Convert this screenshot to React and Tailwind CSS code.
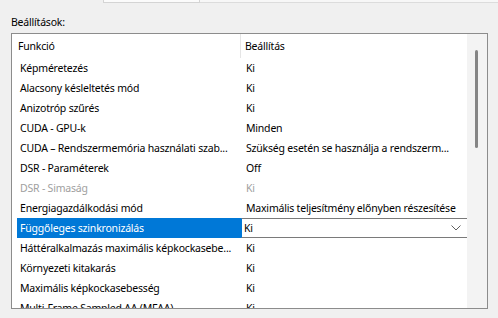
import React from 'react';

const rows = [
  { name: 'Képméretezés', value: 'Ki' },
  { name: 'Alacsony késleltetés mód', value: 'Ki' },
  { name: 'Anizotróp szűrés', value: 'Ki' },
  { name: 'CUDA - GPU-k', value: 'Minden' },
  { name: 'CUDA – Rendszermemória használati szab...', value: 'Szükség esetén se használja a rendszerm...' },
  { name: 'DSR - Paraméterek', value: 'Off' },
  { name: 'DSR - Simaság', value: 'Ki', disabled: true },
  { name: 'Energiagazdálkodási mód', value: 'Maximális teljesítmény előnyben részesítése' },
  { name: 'Függőleges szinkronizálás', value: 'Ki', selected: true },
  { name: 'Háttéralkalmazás maximális képkockasebe...', value: 'Ki' },
  { name: 'Környezeti kitakarás', value: 'Ki' },
  { name: 'Maximális képkockasebesség', value: 'Ki' },
  { name: 'Multi-Frame Sampled AA (MFAA)', value: 'Ki' },
];

function Row({ row }) {
  if (row.selected) {
    return (
      <div className="flex h-[20px] shrink-0">
        <div className="w-[229px] pl-[5px] flex">
          <div className="flex-1 bg-[#0078d7] text-white pl-[3px] leading-[20px] whitespace-nowrap overflow-hidden">
            {row.name}
          </div>
        </div>
        <div className="w-[227px] -mr-[1px] border border-[#7a7a7a] border-l-[#0078d7] bg-white flex items-center justify-between pl-[2px] pr-[6px]">
          <span className="leading-[18px]">{row.value}</span>
          <svg width="10" height="6" viewBox="0 0 10 6" fill="none">
            <path d="M0.5 0.5 L5 5 L9.5 0.5" stroke="#606060" strokeWidth="1" />
          </svg>
        </div>
      </div>
    );
  }
  const color = row.disabled ? 'text-[#a0a0a0]' : 'text-black';
  return (
    <div className={`flex h-[20px] shrink-0 leading-[20px] ${color}`}>
      <div className="w-[229px] pl-[8px] whitespace-nowrap overflow-hidden">{row.name}</div>
      <div className="w-[226px] pl-[5px] whitespace-nowrap overflow-hidden">{row.value}</div>
    </div>
  );
}

export default function App() {
  return (
    <div className="w-[498px] h-[318px] bg-[#f0f0f0] overflow-hidden font-['Noto_Sans',sans-serif] text-[10.5px] tracking-[-0.2px] text-black">
      {/* remnant of the tab strip above */}
      <div className="flex h-[3px]">
        <div className="w-[103px]" />
        <div className="w-[97px] bg-[#fbfbfb] border-b border-l border-r border-[#d4d4d4]" />
        <div className="flex-1 bg-[#f7f7f7] border-b border-[#dcdcdc]" />
      </div>

      <div className="pl-[11px] pt-[11px] h-[30px] leading-[16px]">Beállítások:</div>

      <div className="ml-[11px] w-[477px] h-[276px] border border-[#8c8c8c] bg-white flex">
        <div className="flex-1 flex flex-col overflow-hidden">
          <div className="flex h-[24px] shrink-0 leading-[24px]">
            <div className="w-[229px] pl-[6px] border-r border-[#e5e5e5]">Funkció</div>
            <div className="pl-[4px]">Beállítás</div>
          </div>
          {rows.map((row) => (
            <Row key={row.name} row={row} />
          ))}
        </div>
        <div className="w-[20px] bg-[#f3f3f3] flex flex-col items-center">
          <div className="h-[16px]" />
          <div className="w-[3px] h-[98px] rounded-full bg-[#858585] mr-[1px]" />
        </div>
      </div>
    </div>
  );
}
